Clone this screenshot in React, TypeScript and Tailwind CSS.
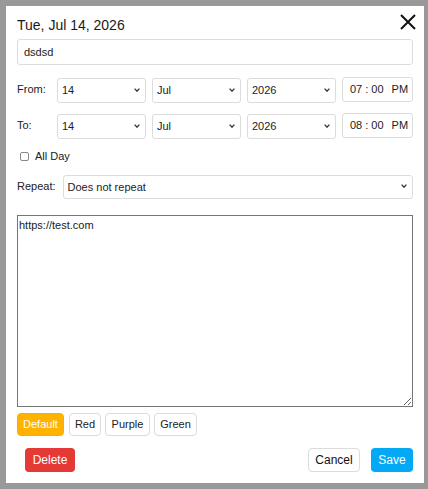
import React from "react";

const font = { fontFamily: '"Liberation Sans", Arial, sans-serif' };

function Chevron() {
  return (
    <svg
      className="absolute right-[6px] top-1/2 -translate-y-1/2 pointer-events-none"
      width="6"
      height="4"
      viewBox="0 0 6 4"
    >
      <path d="M0.6 0.6 L3 3.2 L5.4 0.6" stroke="#333" strokeWidth="1.3" fill="none" />
    </svg>
  );
}

function Sel({ value, w, h = "h-[25px]" }: { value: string; w: string; h?: string }) {
  return (
    <div className={`relative ${w} ${h} shrink-0`}>
      <select
        defaultValue={value}
        className={`appearance-none w-full h-full border border-[#dcdcdc] rounded-[3px] bg-white pl-[4px] text-[11px] text-[#222] outline-none`}
      >
        <option>{value}</option>
      </select>
      <Chevron />
    </div>
  );
}

function TimeBox({ h }: { h: string }) {
  return (
    <div className="w-[71px] h-[25px] shrink-0 border border-[#dcdcdc] rounded-[3px] flex items-center pl-[7px] text-[11px] text-[#222]">
      <span>{h}</span>
      <span className="mx-[3px]">:</span>
      <span>00</span>
      <span className="ml-[8px]">PM</span>
    </div>
  );
}

function DateRow({ label, time }: { label: string; time: string }) {
  return (
    <div className="flex items-center h-[25px]">
      <div className="w-[40px] shrink-0 text-[11px] text-[#222]">{label}</div>
      <div className="flex gap-[6px]">
        <Sel value="14" w="w-[89px]" />
        <Sel value="Jul" w="w-[89px]" />
        <Sel value="2026" w="w-[89px]" />
        <TimeBox h={time} />
      </div>
    </div>
  );
}

export default function App() {
  return (
    <div className="w-[428px] h-[489px] bg-[#999999] pl-[6px] pt-[6px]" style={font}>
      <div className="relative bg-white w-[418px] h-[477px] px-[11px] pt-[10px]">
        <svg
          className="absolute right-[8px] top-[8px]"
          width="16"
          height="16"
          viewBox="0 0 16 16"
        >
          <path d="M1 1 L15 15 M15 1 L1 15" stroke="#111" strokeWidth="2" fill="none" />
        </svg>
        <div className="h-[18px] text-[14px] leading-[18px] text-[#1a1a1a]">Tue, Jul 14, 2026</div>
        <input
          defaultValue="dsdsd"
          className="mt-[5px] block w-full h-[26px] border border-[#dcdcdc] rounded-[3px] px-[6px] text-[11px] text-[#222] outline-none"
        />
        <div className="mt-[12px]">
          <DateRow label="From:" time="07" />
        </div>
        <div className="mt-[11px]">
          <DateRow label="To:" time="08" />
        </div>
        <div className="mt-[12px] flex items-center h-[12px]">
          <span className="ml-[3px] w-[9px] h-[9px] border border-[#888] rounded-[2px] bg-white" />
          <span className="ml-[6px] text-[11px] text-[#222]">All Day</span>
        </div>
        <div className="mt-[12px] flex items-center h-[24px]">
          <div className="text-[11px] text-[#222]">Repeat:</div>
          <div className="ml-[7px] flex-1">
            <Sel value="Does not repeat" w="w-full" h="h-[24px]" />
          </div>
        </div>
        <textarea
          defaultValue="https://test.com"
          className="mt-[17px] block w-full h-[192px] border border-[#767676] px-[1px] py-[2px] text-[11px] text-[#222] leading-[14px] outline-none"
        />
        <div className="mt-[6px] flex h-[23px]">
          <button className="h-[23px] w-[47px] rounded-[4px] border border-[#f5b100] bg-[#ffb300] text-white text-[11px]">
            Default
          </button>
          <button className="ml-[5px] h-[23px] w-[32px] rounded-[4px] border border-[#dcdcdc] bg-white text-[#222] text-[11px]">
            Red
          </button>
          <button className="ml-[4px] h-[23px] w-[45px] rounded-[4px] border border-[#dcdcdc] bg-white text-[#222] text-[11px]">
            Purple
          </button>
          <button className="ml-[4px] h-[23px] w-[43px] rounded-[4px] border border-[#dcdcdc] bg-white text-[#222] text-[11px]">
            Green
          </button>
        </div>
        <div className="mt-[12px] flex items-center">
          <button className="ml-[8px] h-[24px] w-[50px] rounded-[4px] bg-[#e53935] text-white text-[12px]">
            Delete
          </button>
          <div className="flex-1" />
          <button className="h-[24px] w-[52px] rounded-[4px] border border-[#dcdcdc] bg-white text-[#111] text-[12px]">
            Cancel
          </button>
          <button className="ml-[11px] h-[24px] w-[42px] rounded-[4px] bg-[#03a9f4] text-white text-[12px]">
            Save
          </button>
        </div>
      </div>
    </div>
  );
}
